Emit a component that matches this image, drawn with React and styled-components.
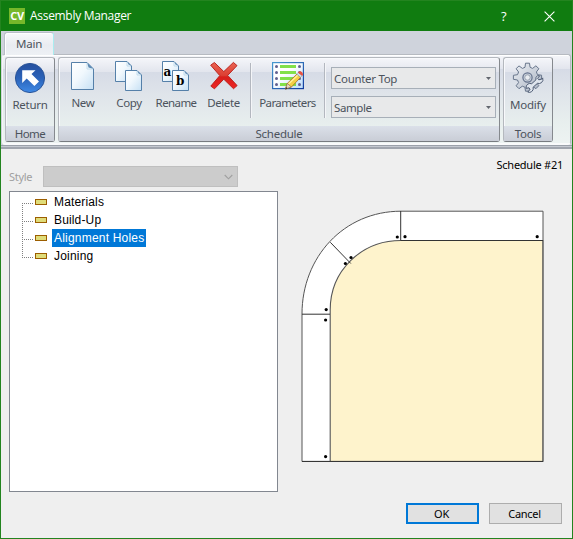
import React from 'react';
import styled, { createGlobalStyle } from 'styled-components';

const GlobalStyle = createGlobalStyle`
  * { box-sizing: border-box; }
  body { margin: 0; overflow: hidden; }
`;

const Window = styled.div`
  width: 573px;
  height: 539px;
  border: 1px solid #23841f;
  background: #efefef;
  display: flex;
  flex-direction: column;
  font-family: "Noto Sans", "Open Sans", sans-serif;
  font-size: 11.5px;
  color: #4c535c;
  white-space: nowrap;
  cursor: default;
`;

const TitleBar = styled.header`
  height: 30px;
  flex: none;
  background: #107c10;
  color: #fff;
  display: flex;
  align-items: center;
  padding: 0 17px 0 8px;
`;

const Logo = styled.span`
  width: 16px;
  height: 16px;
  background: #76b82a;
  font: 700 11px/16px "Open Sans", sans-serif;
  text-align: center;
  letter-spacing: -0.3px;
`;

const WindowTitle = styled.h1`
  flex: 1;
  margin: 0 0 0 5px;
  font: 400 12px/16px "Open Sans", sans-serif;
  letter-spacing: ${p => p.$spacing}px;
`;

const HelpMark = styled.span`
  width: 43px;
  font: 400 13px/16px "Open Sans", sans-serif;
`;

const RibbonArea = styled.section`
  height: 118px;
  flex: none;
  background: #cfd3dc;
  display: flex;
  flex-direction: column;
`;

const TabStrip = styled.nav`
  height: 23px;
  padding: 1px 3px 0;
  flex: none;
`;

const Tab = styled.div`
  width: 50px;
  height: 23px;
  border: 1px solid #b9bec8;
  border-right-color: #a9edf0;
  border-bottom: 0;
  border-radius: 3px 3px 0 0;
  background: linear-gradient(#f8f9fb, #e9ecf1 55%, #eef1f5);
  box-shadow: inset 1px 1px #fff;
  position: relative;
  z-index: 1;
  text-align: center;
  line-height: 22px;
  letter-spacing: ${p => p.$spacing}px;
`;

const sheen = `
  linear-gradient(#f5f6fa 0, #e2e5ed 14px, #d6dbe6 14px, #dfe4ea 36px, #e8efee 68px, #edf3f2 100%)
`;

const Ribbon = styled.div`
  height: 91px;
  flex: none;
  margin: 0 1px 0 1px;
  padding: 2px 2px 1px;
  border: 1px solid #b6bac1;
  border-left-color: #f5f5f7;
  border-bottom: 2px solid #f9fafb;
  border-radius: 3px;
  background: ${sheen};
  box-shadow: inset 0 1px #fff;
  display: flex;
  gap: 3px;
`;

const RibbonFoot = styled.div`
  height: 4px;
  background: linear-gradient(#9ba1aa 1px, #c5c9d1 1px 2px, #a0a5ae 2px);
`;

const Group = styled.section`
  width: ${p => p.$width}px;
  height: 85px;
  flex: none;
  border: 1px solid #b4b8be;
  border-right-color: #85898e;
  border-bottom-color: #777b80;
  border-radius: 3px;
  background: ${sheen};
  box-shadow: inset 1px 1px #f8f9fc;
  display: flex;
  flex-direction: column;
`;

const GroupBody = styled.div`
  height: 68px;
  flex: none;
  display: flex;
`;

const GroupCaption = styled.div`
  height: 15px;
  background: linear-gradient(#dbe0e9, #c9cdd6);
  text-align: center;
  line-height: 16px;
  letter-spacing: ${p => p.$spacing ?? 0}px;
`;

const ToolButton = styled.div`
  width: ${p => p.$width}px;
  flex: none;
  display: flex;
  flex-direction: column;
  align-items: center;
  padding-top: ${p => (p.$large ? 4 : 2)}px;
  svg { display: block; flex: none; }
`;

const ToolLabel = styled.span`
  height: 18px;
  margin-top: 2px;
  line-height: 18px;
  letter-spacing: ${p => p.$spacing ?? 0}px;
`;

const Divider = styled.div`
  width: 2px;
  height: 55px;
  margin-top: 5px;
  margin-left: ${p => p.$gap ?? 0}px;
  flex: none;
  background: linear-gradient(90deg, #b3b7bf 1px, #f4f5f8 1px);
`;

const ComboStack = styled.div`
  display: flex;
  flex-direction: column;
  gap: 7px;
  padding: 9px 0 0 5px;
`;

const Combo = styled.div`
  width: 165px;
  height: 22px;
  border: 1px solid #a7afb8;
  background: #e8e9ea;
  display: flex;
  align-items: center;
  justify-content: space-between;
  padding: 0 4px 0 2px;
  letter-spacing: ${p => p.$spacing}px;
`;

const Content = styled.main`
  flex: 1;
  display: flex;
  padding: 0 9px 0 8px;
`;

const LeftPane = styled.div`
  width: 269px;
  display: flex;
  flex-direction: column;
`;

const StyleRow = styled.div`
  display: flex;
  align-items: center;
  margin-top: 17px;
  height: 21px;
  font: 11px "Noto Sans", sans-serif;
  letter-spacing: -0.3px;
  color: #a0a0a0;
`;

const StyleLabel = styled.span`
  width: 34px;
`;

const StyleSelect = styled.div`
  width: 195px;
  height: 21px;
  border: 1px solid #bfbfbf;
  background: #cccccc;
  display: flex;
  align-items: center;
  justify-content: flex-end;
  padding-right: 4px;
`;

const Tree = styled.ul`
  width: 269px;
  height: 301px;
  margin: 4px 0 0;
  padding: 1px 0 0 12px;
  border: 1px solid #828790;
  background: #fff;
  list-style: none;
`;

const TreeItem = styled.li`
  height: 18px;
  display: flex;
  align-items: center;
  font: 12px "Liberation Sans", Arial, sans-serif;
  color: #000;
  svg { flex: none; display: block; }
`;

const TreeLabel = styled.span`
  height: 18px;
  margin-left: 4px;
  padding: 0 2px;
  line-height: 18px;
  letter-spacing: ${p => p.$spacing}px;
  background: ${p => (p.$selected ? '#0078d7' : 'transparent')};
  color: ${p => (p.$selected ? '#fff' : '#000')};
`;

const RightPane = styled.div`
  flex: 1;
  display: flex;
  flex-direction: column;
  align-items: flex-end;
  color: #000;
  font: 11px "Noto Sans", sans-serif;
`;

const ScheduleName = styled.div`
  height: 16px;
  margin-top: 8px;
  line-height: 16px;
  letter-spacing: ${p => p.$spacing}px;
`;

const Drawing = styled.svg`
  display: block;
  width: 250px;
  height: 260px;
  margin: 33px 15px 0 0;
`;

const Buttons = styled.footer`
  display: flex;
  gap: 10px;
  margin: 37px 1px 0 0;
`;

const Button = styled.button`
  width: 73px;
  height: 21px;
  padding: 0 2px 1px 0;
  border: ${p => (p.$primary ? '2px solid #0078d7' : '1px solid #adadad')};
  background: #e1e1e1;
  color: #000;
  font: 11px "Noto Sans", sans-serif;
  letter-spacing: ${p => p.$spacing ?? 0}px;
`;

const CloseIcon = () => (
  <svg width="11" height="11" viewBox="0 0 11 11">
    <path d="M.6.6l9.800 9.800M10.400.6L.6 10.400" stroke="#fff" strokeWidth="1.1" />
  </svg>
);

const ReturnIcon = () => (
  <svg width="32" height="32" viewBox="0 0 32 32">
    <defs>
      <linearGradient id="disc" x1="0" y1="0" x2="0" y2="1">
        <stop offset="0" stopColor="#254f9e" />
        <stop offset=".5" stopColor="#2b62b8" />
        <stop offset="1" stopColor="#3f8ae6" />
      </linearGradient>
    </defs>
    <circle cx="16" cy="16" r="14.6" fill="url(#disc)" stroke="#2b5599" />
    <path d="M8.2 8.2H21.500l-4 3.900 7.500 7.300-4.600 4.600-7.700-7.400-4.500 4.300z" fill="#fff" />
  </svg>
);

const Paper = ({ x = 0, y = 0, w, h, fold }) => (
  <g transform={`translate(${x} ${y})`}>
    <path d={`M.5.5H${w - fold}L${w - 0.5} ${fold}V${h - 0.5}H.5z`} fill="url(#sheet)" stroke="#5580a9" />
    <path d={`M${w - fold} .5L${w - fold + 1.5} ${fold - 1.5}L${w - 0.5} ${fold}z`} fill="#5c8ab4" />
    <path d={`M${w - fold} 1v${fold - 1}h${fold - 1}`} fill="none" stroke="#b8d5e8" strokeWidth=".8" />
  </g>
);

const SheetFill = () => (
  <defs>
    <linearGradient id="sheet" x1="0" y1="0" x2="1" y2="1">
      <stop offset="0" stopColor="#fff" />
      <stop offset=".45" stopColor="#f1f8fd" />
      <stop offset="1" stopColor="#c6e0f4" />
    </linearGradient>
  </defs>
);

const NewIcon = () => (
  <svg width="32" height="32" viewBox="0 0 32 32">
    <SheetFill />
    <Paper x={4} y={2} w={23} h={28} fold={7} />
  </svg>
);

const CopyIcon = () => (
  <svg width="32" height="32" viewBox="0 0 32 32">
    <SheetFill />
    <Paper x={2} y={1} w={17} h={21} fold={5} />
    <Paper x={12} y={10} w={17} h={21} fold={5} />
  </svg>
);

const RenameIcon = () => (
  <svg width="32" height="32" viewBox="0 0 32 32">
    <SheetFill />
    <Paper x={2} y={1} w={17} h={21} fold={5} />
    <text x="3.5" y="16" fontFamily="DejaVu Serif" fontWeight="700" fontSize="12" fill="#000">a</text>
    <Paper x={12} y={10} w={17} h={21} fold={5} />
    <text x="16" y="25" fontFamily="DejaVu Serif" fontWeight="700" fontSize="12" fill="#000">b</text>
  </svg>
);

const DeleteIcon = () => (
  <svg width="32" height="32" viewBox="0 0 32 32">
    <defs>
      <linearGradient id="cross" x1="0" y1="0" x2="0" y2="1">
        <stop offset="0" stopColor="#ea6554" />
        <stop offset=".5" stopColor="#dc3e32" />
        <stop offset=".55" stopColor="#d81f1b" />
        <stop offset="1" stopColor="#ef2525" />
      </linearGradient>
    </defs>
    <path
      d="M2.7 5.2L6.4 2.5 15.8 11.6 25.4 2.4 29 5.6 19.7 15.4 29.1 25.6 25.5 28.7 15.8 19.2 6.5 28.8 2.8 26.1 11.8 15.6z"
      fill="url(#cross)" stroke="#bc251f" strokeLinejoin="round"
    />
  </svg>
);

const ParametersIcon = () => (
  <svg width="32" height="32" viewBox="0 0 32 32">
    <defs>
      <linearGradient id="list" x1="0" y1="0" x2="1" y2="1">
        <stop offset=".4" stopColor="#fff" />
        <stop offset="1" stopColor="#b9dcfb" />
      </linearGradient>
      <linearGradient id="edge" x1="0" y1="0" x2="1" y2="1">
        <stop offset="0" stopColor="#4798cf" />
        <stop offset="1" stopColor="#133d9e" />
      </linearGradient>
    </defs>
    <rect x=".6" y="2.6" width="30.8" height="26" fill="url(#list)" stroke="url(#edge)" strokeWidth="1.2" />
    {[6.5, 12.5, 18.5, 24.5].map(y => (
      <g key={y}>
        <circle cx="4.5" cy={y} r="1.5" fill="#62608f" />
        <circle cx="27.5" cy={y} r="1.5" fill="#62608f" />
        <rect x="8" y={y - 1.5} width="16" height="3" fill="#82e04b" />
      </g>
    ))}
    <path d="M13.5 29l1.8-5.6L25 14l3.700 3.200-9.300 9.900z" fill="#f5ce45" stroke="#a86a20" strokeWidth=".8" />
    <path d="M16.3 24.2L26 15" stroke="#fff09a" strokeWidth="1.4" />
    <path d="M13.5 29l1.8-5.6 4 3.6z" fill="#e5d4c1" stroke="#85644a" strokeWidth=".6" />
    <path d="M13.3 29.4l.8-2.3 1.5 1.3z" fill="#333" />
    <path d="M24.6 14l1.5-1.6 4 3.300-1.500 1.700z" fill="#d7dde5" stroke="#7d8795" strokeWidth=".5" />
    <path d="M26 12.500q2-2.200 4.300-.1 1.700 1.700 0 3.500z" fill="#e9503f" />
  </svg>
);

const GearIcon = () => (
  <svg width="32" height="32" viewBox="0 0 32 32">
    <defs>
      <linearGradient id="steel" x1="0" y1="0" x2="1" y2="1">
        <stop offset="0" stopColor="#edf0f5" />
        <stop offset="1" stopColor="#a9b2c1" />
      </linearGradient>
    </defs>
    <path
      d="M13 5.3L13.5 1.2h4l.6 4.1 2.5 1.1 3.3-2.6 3 2.9-2.5 3.3 1.1 2.7 4.1.5v4l-4.1.7-1.1 2.6 2.4 3.2-2.9 3-3.4-2.5-2.4 1-.7 4h-3.9l-.6-4-2.6-1-3.3 2.5-2.9-2.9L6.6 20.6l-1.1-2.6-4.1-.7v-4l4.1-.6 1.1-2.7L4.1 6.7 7 3.9l3.4 2.5z"
      fill="url(#steel)" stroke="#68768c" strokeLinejoin="round"
    />
    <circle cx="15.5" cy="15.5" r="4.6" fill="#c9d0dc" stroke="#64718b" strokeWidth="1.2" />
    <circle cx="15.5" cy="15.5" r="2.7" fill="#e9ecf1" stroke="#7e899a" strokeWidth=".7" />
    <path
      d="M25.6 13.6l2 .3-2 2.4 1.2 1.5 3-.7.9-1.2q1 3-1.3 4.8-1.8 1.3-3.9.6l-4.3 3.8q.6 3-1.6 4.6-1.7 1.2-3.8.4l2.2-2.7-1-1.6-3 .5q-.2-2.8 1.8-4.2 1.7-1.1 3.9-.4l4.2-3.8q-.6-2.9 1.7-4.3z"
      fill="#dfe5ed" stroke="#505d75" strokeLinejoin="round"
    />
  </svg>
);

const DropArrow = () => (
  <svg width="5" height="3" viewBox="0 0 5 3"><path d="M0 0h5L2.5 3z" fill="#62666e" /></svg>
);

const Chevron = () => (
  <svg width="9" height="6" viewBox="0 0 9 6">
    <path d="M.7 1l3.8 3.8L8.3 1" fill="none" stroke="#a0a0a0" strokeWidth="1.1" />
  </svg>
);

const Branch = ({ first, last }) => (
  <svg width="26" height="18" viewBox="0 0 26 18">
    <path
      d={`M.5 ${first ? 10 : 0}V${last ? 11 : 18}`}
      stroke="#808080" strokeDasharray="1 1" shapeRendering="crispEdges"
    />
    <path d="M0 10.5h12" stroke="#808080" strokeDasharray="1 1" shapeRendering="crispEdges" />
    <rect x="13.5" y="6.5" width="11" height="5" fill="#dfdc79" stroke="#9c5e00" />
  </svg>
);

const dots = [
  [397.3, 237], [405, 236.7], [537.2, 236.7], [351, 257.5],
  [345.4, 263.5], [326.2, 309.6], [325.6, 320], [325.6, 456.6],
];

const CounterTop = () => (
  <Drawing viewBox="298 206 250 260">
    <path
      d="M302 461.5V314C302 257 344 211.2 401 211.2H543V461.5z"
      fill="#fff" stroke="#555" strokeWidth="1"
    />
    <path
      d="M330.2 461.5V310C330.2 271 361 240.5 401 240.5H542.8V461.5z"
      fill="#fef3cc" stroke="#555" strokeWidth="1.1"
    />
    <path
      d="M400.7 211v29.5M302 314.2h28M330.3 242.3l20.5 21.2M401 240.5h142M302 461.4h241"
      fill="none" stroke="#333"
    />
    {dots.map(([x, y]) => <circle key={`${x}-${y}`} cx={x} cy={y} r="1.6" fill="#000" />)}
  </Drawing>
);

const treeItems = [
  { label: 'Materials', spacing: 0.15 },
  { label: 'Build-Up', spacing: 0.15 },
  { label: 'Alignment Holes', spacing: 0.2, selected: true },
  { label: 'Joining', spacing: 0.2 },
];

const Tool = ({ icon, label, width, large, spacing }) => (
  <ToolButton $width={width} $large={large}>
    {icon}
    <ToolLabel $large={large} $spacing={spacing}>{label}</ToolLabel>
  </ToolButton>
);

export default function App() {
  return (
    <>
      <GlobalStyle />
      <Window>
        <TitleBar>
          <Logo>CV</Logo>
          <WindowTitle $spacing={-0.3}>Assembly Manager</WindowTitle>
          <HelpMark>?</HelpMark>
          <CloseIcon />
        </TitleBar>
        <RibbonArea>
          <TabStrip><Tab $spacing={-0.2}>Main</Tab></TabStrip>
          <Ribbon>
            <Group $width={50}>
              <GroupBody>
                <Tool icon={<ReturnIcon />} label="Return" width={48} large spacing={-0.3} />
              </GroupBody>
              <GroupCaption $spacing={-0.6}>Home</GroupCaption>
            </Group>
            <Group $width={442}>
              <GroupBody>
                <Tool icon={<NewIcon />} label="New" width={48} spacing={-0.3} />
                <Tool icon={<CopyIcon />} label="Copy" width={44} spacing={-0.4} />
                <Tool icon={<RenameIcon />} label="Rename" width={50} spacing={-0.6} />
                <Tool icon={<DeleteIcon />} label="Delete" width={45} spacing={-0.4} />
                <Divider $gap={4} />
                <Tool icon={<ParametersIcon />} label="Parameters" width={71} spacing={-0.6} />
                <Divider $gap={1} />
                <ComboStack>
                  <Combo $spacing={-0.3}>Counter Top<DropArrow /></Combo>
                  <Combo $spacing={-0.4}>Sample<DropArrow /></Combo>
                </ComboStack>
              </GroupBody>
              <GroupCaption $spacing={-0.25}>Schedule</GroupCaption>
            </Group>
            <Group $width={50}>
              <GroupBody>
                <Tool icon={<GearIcon />} label="Modify" width={48} large spacing={-0.2} />
              </GroupBody>
              <GroupCaption $spacing={-0.3}>Tools</GroupCaption>
            </Group>
          </Ribbon>
          <RibbonFoot />
        </RibbonArea>
        <Content>
          <LeftPane>
            <StyleRow>
              <StyleLabel>Style</StyleLabel>
              <StyleSelect><Chevron /></StyleSelect>
            </StyleRow>
            <Tree>
              {treeItems.map((item, i) => (
                <TreeItem key={item.label}>
                  <Branch first={i === 0} last={i === treeItems.length - 1} />
                  <TreeLabel $selected={item.selected} $spacing={item.spacing}>{item.label}</TreeLabel>
                </TreeItem>
              ))}
            </Tree>
          </LeftPane>
          <RightPane>
            <ScheduleName $spacing={-0.25}>Schedule #21</ScheduleName>
            <CounterTop />
            <Buttons>
              <Button $primary $spacing={-0.3}>OK</Button>
              <Button $spacing={-0.3}>Cancel</Button>
            </Buttons>
          </RightPane>
        </Content>
      </Window>
    </>
  );
}
